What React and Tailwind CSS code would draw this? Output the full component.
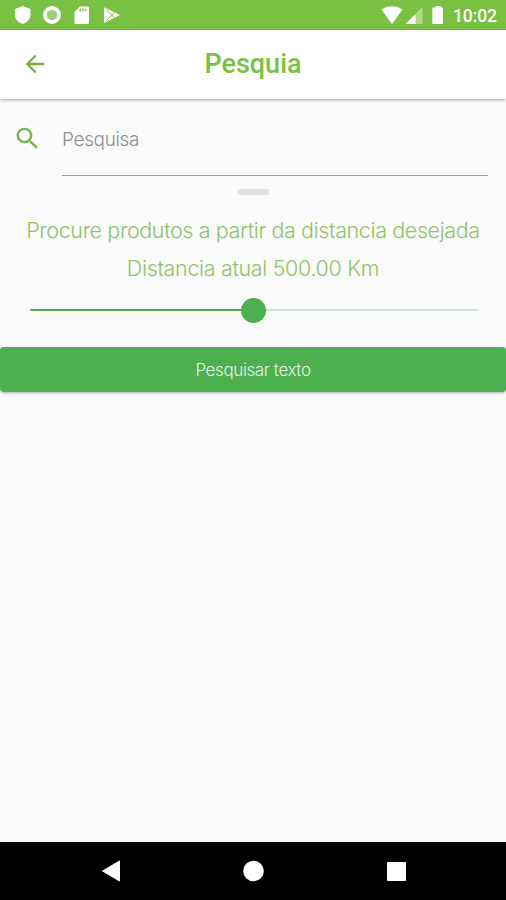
function StatusBar() {
  return (
    <header className="flex h-[30px] shrink-0 items-center bg-[#7ac143] text-white">
      <svg width="130" height="30" viewBox="0 0 130 30" fill="currentColor">
        <path d="M22.700 6 30.500 9v6c0 4-3.200 7.500-7.800 9-4.600-1.500-7.800-5-7.800-9V9z" />
        <circle cx="52" cy="15" r="9" />
        <circle cx="52" cy="15" r="5.300" fill="#9ed274" />
        <path fillRule="evenodd" d="M80 6.500h7.500a1.500 1.500 0 0 1 1.500 1.500v14.500a1.500 1.500 0 0 1-1.500 1.500H76a1.500 1.500 0 0 1-1.500-1.500V12zM79.500 8.800v2.500h1.500v-2.500zm2.800 0v2.500h1.500v-2.500zm2.800 0v2.500h1.500v-2.500z" />
        <path d="M104 7.300 119.800 15 104 23z" />
        <path d="M106 9.500 114.500 17.500M106 21 114.500 12.500" stroke="#7ac143" strokeWidth="0.900" fill="none" />
      </svg>
      <div className="ml-auto flex h-full items-center pr-[9px]">
        <svg width="72" height="30" viewBox="0 0 72 30" fill="currentColor">
          <path d="M10.500 9.500C16.500 5 25.500 5 31.500 9.500L21 24z" />
          <path d="M51.500 7v17H34.500z" opacity=".4" />
          <path d="M44.500 14v10h-10z" />
          <path d="M64.800 6h5v1.500h1.500a1 1 0 0 1 1 1v14.500a1 1 0 0 1-1 1h-9a1 1 0 0 1-1-1V8.500a1 1 0 0 1 1-1h2.500z" />
        </svg>
        <span className="ml-[10px] w-[44px] whitespace-nowrap pt-[2px] font-['Roboto',sans-serif] text-[17.500px] font-medium leading-[28px] tracking-[-0.100px]">10:02</span>
      </div>
    </header>
  );
}

function AppBar() {
  return (
    <div className="z-10 grid h-[69px] shrink-0 grid-cols-[70px_1fr_70px] items-center bg-white text-[#7ac143] shadow-[0_1px_3px_rgba(0,0,0,0.35)]">
      <svg className="mb-px ml-[21px]" width="28" height="28" viewBox="0 0 24 24" fill="#72b043">
        <path d="M20 11H7.830l5.590-5.590L12 4l-8 8 8 8 1.410-1.410L7.830 13H20z" />
      </svg>
      <h1 className="mb-[2px] text-center font-['Roboto',sans-serif] text-[27px] font-medium leading-8">Pesquia</h1>
    </div>
  );
}

function SearchField() {
  return (
    <div className="flex h-[77px] shrink-0 pl-[13px] pr-[18px]">
      <svg className="mt-[25px] shrink-0" width="29" height="29" viewBox="0 0 24 24" fill="#72b943">
        <path d="M15.500 14h-.790l-.280-.270A6.471 6.471 0 0 0 16 9.500 6.500 6.500 0 1 0 9.500 16c1.610 0 3.090-.590 4.230-1.570l.270.280v.790l5 4.990L20.490 19zm-6 0C7.010 14 5 11.990 5 9.500S7.010 5 9.500 5 14 7.010 14 9.500 11.990 14 9.500 14z" />
      </svg>
      <div className="ml-5 flex-1 border-b border-[#a0a0a0] pt-[29px] font-['Inter',sans-serif] text-[19px] font-light leading-6 tracking-[-0.350px] text-[#8f8f8f]">Pesquisa</div>
    </div>
  );
}

function DistanceSlider() {
  return (
    <div className="ml-[30px] mr-[27px] mt-[10px] flex h-[26px] items-center">
      <div className="h-[2px] w-[211px] rounded-l-full bg-[#4caf50]" />
      <div className="size-[25px] rounded-full bg-[#4caf50]" />
      <div className="h-[2px] flex-1 rounded-r-full bg-[#cfe7d1]" />
    </div>
  );
}

export default function App() {
  return (
    <div className="flex h-[900px] w-[506px] flex-col overflow-hidden bg-[#fafafa]">
      <StatusBar />
      <AppBar />
      <main className="flex min-h-0 flex-1 flex-col">
        <SearchField />
        <div className="mx-auto mt-[13px] h-[6px] w-[31px] shrink-0 rounded-full bg-[#e0e0e0]" />
        <div className="mt-[16px] text-center font-['Inter',sans-serif] text-[21.500px] font-light leading-[38px] text-[#8ec465]">
          <p className="whitespace-nowrap tracking-[-0.380px]">Procure produtos a partir da distancia desejada</p>
          <p className="whitespace-nowrap tracking-[-0.340px]">Distancia atual 500.00 Km</p>
        </div>
        <DistanceSlider />
        <button className="mt-[24px] h-[45px] w-full shrink-0 rounded-[4px] bg-[#4caf50] pt-[3px] font-['Inter',sans-serif] text-[17px] font-light tracking-[-0.400px] text-[#e4f4e4] shadow-[0_1px_3px_rgba(0,0,0,0.3)]">
          Pesquisar texto
        </button>
      </main>
      <nav className="flex h-[58px] shrink-0 items-center bg-black text-white">
        <svg width="506" height="58" viewBox="0 0 506 58" fill="currentColor">
          <path d="M102.500 29 119.500 19v20z" stroke="currentColor" strokeWidth="1" strokeLinejoin="round" />
          <circle cx="253.500" cy="29" r="10.300" />
          <rect x="387" y="20" width="19" height="19" rx="1" />
        </svg>
      </nav>
    </div>
  );
}
